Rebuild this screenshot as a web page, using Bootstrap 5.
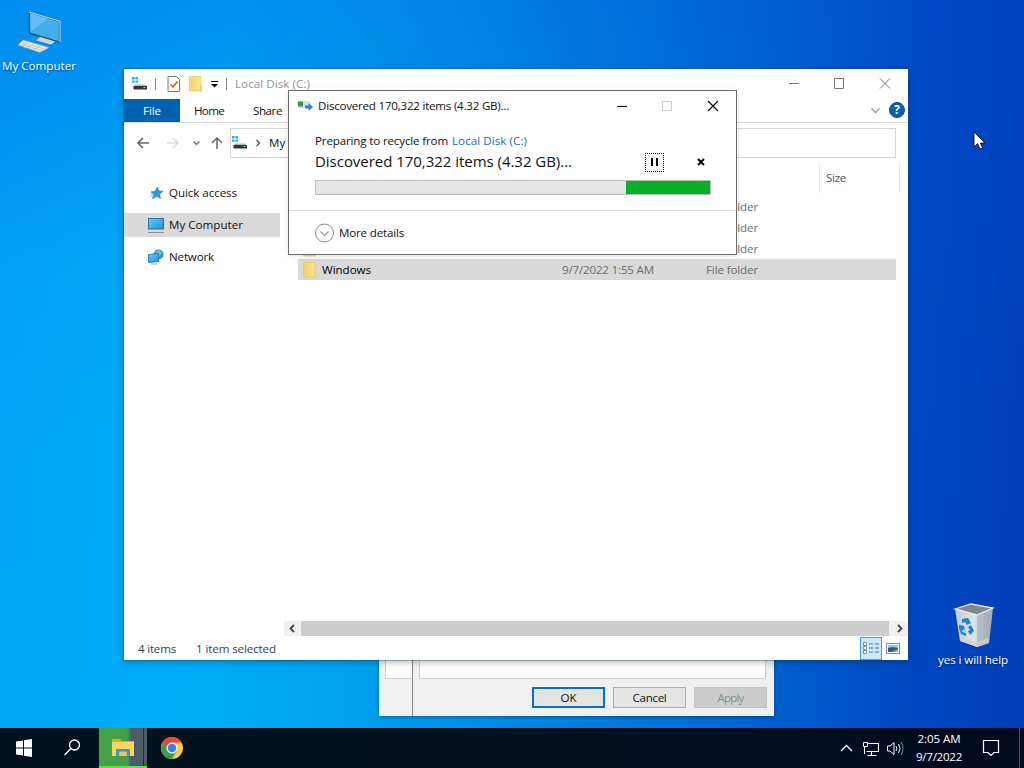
<!DOCTYPE html>
<html lang="en">
<head>
<meta charset="UTF-8">
<meta name="viewport" content="width=device-width, initial-scale=1.0">
<title>Desktop</title>
<link href="https://cdn.jsdelivr.net/npm/bootstrap@5.3.3/dist/css/bootstrap.min.css" rel="stylesheet">
<style>
  body {
    font-family: "Open Sans", "Noto Sans", sans-serif;
    font-size: 11.6px;
    line-height: 16px;
    color: #111;
    width: 1024px;
    height: 768px;
    overflow: hidden;
  }
  svg { display: block; flex-shrink: 0; }
  [data-w] { white-space: nowrap; flex-shrink: 0; }

  .desktop {
    height: 768px;
    background:
      linear-gradient(180deg, rgba(0,70,215,.26), rgba(0,90,225,.06) 35%, rgba(0,100,230,0) 60%),
      linear-gradient(93deg, #00a4f6 0%, #00aef8 22%, #009fee 38%, #0084e0 55%, #0064d1 74%, #0049c3 88%, #003db6 100%);
  }
  .desk-icon { position: absolute; color: #fff; text-shadow: 0 1px 2px rgba(0,0,0,.6); }
  .icon-computer { left: 2px; top: 8px; width: 76px; }
  .icon-bin { left: 936px; top: 600px; width: 74px; }
  .pointer { position: absolute; left: 973px; top: 131px; }

  /* properties window behind the explorer */
  .props { position: absolute; left: 379px; top: 640px; width: 395px; height: 76px; background: #f0f0f0; box-shadow: 0 1px 4px rgba(0,0,0,.35); }
  .props-side { width: 34px; padding-left: 6px; border-right: 1px solid #888; }
  .props-side div, .props-list { height: 39px; background: #fff; border: 1px solid #ccc; border-right: 0; }
  .props-list { margin: 0 8px 8px 6px; border-right: 1px solid #ccc; }
  .props-buttons { padding-right: 7px; }
  .props-btn { width: 73px; height: 21px; border: 1px solid #adadad; background: #e4e4e4; border-radius: 0; padding: 0; font-size: 11.6px; line-height: 19px; color: #111; }
  .props-ok { border: 2px solid #0a6fc2; line-height: 17px; }
  .props-apply { background: #ccc; border-color: #c4c4c4; color: #8c8c8c; }

  /* explorer */
  .explorer { position: absolute; left: 124px; top: 69px; width: 784px; height: 591px; background: #fff; box-shadow: 0 0 0 1px rgba(20,80,130,.35), 0 2px 7px rgba(0,0,0,.3); }
  .ex-title { height: 30px; padding: 0 9px 0 8px; color: #929292; }
  .title-sep { width: 1px; height: 12px; background: #8b8b8b; }
  .title-sep-first { margin: 0 11px 0 7px; }
  .ex-ribbon { height: 24px; border-bottom: 1px solid #dadada; }
  .tab-file { width: 56px; height: 23px; background: #0063b1; color: #fff; }
  .tab-home { margin: 0 29px 0 14px; }
  .help-dot { width: 16px; height: 16px; border-radius: 50%; background: #0a62ad; color: #fff; font-weight: 700; border: 1px solid #0a4a88; line-height: 14px; margin-right: 3px; margin-bottom: 1px; }
  .ex-nav { height: 40px; padding: 5px 12px 0 0; }
  .ex-address { height: 30px; border: 1px solid #d6d6d6; padding-left: 1px; }
  .ex-side { width: 160px; padding-top: 18px; }
  .side-row { height: 24px; margin-bottom: 8px; width: 156px; padding-left: 23px; }
  .side-row svg { margin-right: 4px; }
  .row-picked { background: #d9d9d9; }
  .ex-files { width: 624px; padding-left: 14px; }
  .files-head { height: 30px; color: #4c5566; margin-bottom: 3px; }
  .head-type { width: 522px; border-right: 1px solid #e6e6e6; }
  .head-size { width: 80px; padding-left: 6px; border-right: 1px solid #e6e6e6; }
  .file-row { height: 21px; width: 598px; padding-left: 4px; color: #6d6d6d; }
  .col-file { width: 260px; color: #000; }
  .col-when { width: 144px; }
  .ex-scroll { height: 15px; margin-left: 160px; background: #f0f0f0; }
  .scroll-thumb { width: 588px; background: #cdcdcd; }
  .ex-status { height: 24px; padding-left: 14px; color: #33415c; }
  .ex-status span { padding-top: 1px; }
  .view-on { width: 22px; height: 23px; background: #c9e8f8; border: 1px solid #3fa0ce; }

  /* recycle progress */
  .progress-win { position: absolute; left: 288px; top: 90px; width: 449px; height: 165px; background: #fff; border: 1px solid #6b6b6b; box-shadow: 0 1px 6px rgba(0,0,0,.12); }
  .pw-title { height: 29px; padding: 0 4px 0 8px; }
  .pw-body { height: 90px; padding: 13px 26px 0; }
  .pw-link { color: #2569b8; }
  .pw-big { font-size: 15px; line-height: 24px; }
  .pw-tools { padding: 2px 5px 0 0; }
  .pw-bar { height: 15px; width: 396px; background: #e6e6e6; border: 1px solid #bcbcbc; margin-top: 7px; }
  .pw-fill { background: #06b025; }
  .pw-pause { width: 19px; height: 19px; border: 1px dotted #000; margin-right: 33px; }
  .pw-foot { height: 44px; border-top: 1px solid #dfdfdf; padding-left: 26px; }

  /* taskbar */
  .taskbar { position: absolute; left: 0; top: 728px; width: 1024px; height: 40px; background: linear-gradient(90deg, #02131f, #02101f 50%, #020b20); color: #fff; }
  .task-open { width: 48px; height: 40px; background: linear-gradient(90deg, #43a047 0 28px, #4d5a68 32px 44px, #1f2b38 44px 45px, #4d5a68 45px); border-bottom: 2px solid #5ee04a; }
  .chrome-icon { margin-left: 13px; }
  .tray { margin-right: 9px; }
  .clock { width: 48px; line-height: 18px; }
</style>
</head>
<body>

<!-- shared icons -->
<svg width="0" height="0" class="position-absolute">
  <defs>
    <linearGradient id="gScreen" x1="0" y1="0" x2="1" y2="1"><stop offset="0" stop-color="#6ccbf8"/><stop offset="1" stop-color="#1c8fdc"/></linearGradient>
    <linearGradient id="gFolder" x1="0" y1="0" x2="1" y2="0"><stop offset="0" stop-color="#f3d468"/><stop offset="1" stop-color="#fde68f"/></linearGradient>
    <linearGradient id="gBin" x1="0" y1="0" x2="1" y2="0"><stop offset="0" stop-color="#c4cad2"/><stop offset=".5" stop-color="#dfe2e6"/><stop offset="1" stop-color="#a9b1bb"/></linearGradient>
    <symbol id="drive" viewBox="0 0 16 14">
      <path d="M0 0h2.600v2.400H0zM3.400 0H6v2.400H3.400zM0 3.400h2.600v2.400H0zM3.400 3.400H6v2.400H3.400z" fill="#1fb4cf"/>
      <path d="M3 7.500h10.500l1.500 2H1.500z" fill="#b4b9bd"/>
      <rect x="1.500" y="9" width="13.500" height="3.500" rx=".6" fill="#30363b"/>
      <rect x="11.500" y="10" width="2" height="1" fill="#5fd39a"/>
    </symbol>
    <symbol id="folder" viewBox="0 0 14 16">
      <path d="M.5.500h11.500v14.500H.5z" fill="url(#gFolder)" stroke="#e3c45c" stroke-width=".6"/>
      <path d="M11 9.500h2v6h-2z" fill="#f2cf62"/>
    </symbol>
  </defs>
</svg>

<div class="desktop position-relative overflow-hidden">

  <div class="desk-icon icon-computer d-flex flex-column">
    <svg class="ms-3" width="48" height="50" viewBox="0 0 48 50">
      <path d="M11.500 4.500l30 9v20.500l-30-9z" fill="#42aef2" stroke="#333f4c" stroke-width="1.200"/>
      <path d="M12 5l18 5.500-17.500 13z" fill="#7cc8f6" opacity=".6"/>
      <path d="M11 4l31 9.300v21" fill="none" stroke="#d8dde2"/>
      <path d="M22 29l10 3 5 1.500-4 3-15-4z" fill="#cfd4d9"/>
      <path d="M5 32l26 7.500-9 5L0 37z" fill="#e9e9e8" stroke="#a7a7a3" stroke-width=".7"/>
      <path d="M4 34.500l22 6.500M2 36l21.500 6.500M10 34l-6 4M16 35.500l-6 4.500M22 37.500l-6 4" stroke="#b9b9b9" stroke-width=".7"/>
    </svg>
    <span data-w="74">My Computer</span>
  </div>

  <div class="desk-icon icon-bin d-flex flex-column align-items-center">
    <svg width="44" height="48" viewBox="0 0 44 48" class="mb-1">
      <path d="M4 9l22 6 16-8-4 36-12 4L9 41z" fill="url(#gBin)"/>
      <path d="M26 15l16-8-4 36-12 4z" fill="#9ca5b1" opacity=".55"/>
      <path d="M4 9L20 4l22 4-16 7z" fill="#7c8792" stroke="#e8ebee" stroke-width="1.300"/>
      <path d="M9 37l17 5 12-4-.5 5L26 47 9 41z" fill="#d8d2c8" opacity=".7"/>
      <path d="M11 19l6-1 3 5-4 2-2-3-3 1zM20 25l3 6-4 4-2-4 2-1-2-3zM8 25l5 1 1 4-2-1-1 3 4 1v3l-5-2-2-6z" fill="#1686d2"/>
    </svg>
    <span data-w="70">yes i will help</span>
  </div>

  <div class="props d-flex">
    <div class="props-side"><div></div></div>
    <div class="flex-grow-1">
      <div class="props-list"></div>
      <div class="props-buttons d-flex justify-content-end gap-2">
        <button type="button" class="props-btn props-ok"><span data-w="16">OK</span></button>
        <button type="button" class="props-btn"><span data-w="34">Cancel</span></button>
        <button type="button" class="props-btn props-apply" disabled><span data-w="26">Apply</span></button>
      </div>
    </div>
  </div>

  <div class="explorer d-flex flex-column">
    <div class="ex-title d-flex align-items-center">
      <svg width="16" height="14"><use href="#drive"/></svg>
      <div class="title-sep title-sep-first"></div>
      <svg class="me-2" width="14" height="16" viewBox="0 0 14 16"><path d="M1 .5h8.500l3 3v12H1z" fill="#fafafa" stroke="#777"/><path d="M3.500 8.500L6 11l4.500-5.500" fill="none" stroke="#d9472b" stroke-width="1.300"/></svg>
      <svg class="me-2" width="14" height="16"><use href="#folder"/></svg>
      <svg width="7" height="8" viewBox="0 0 7 8"><path d="M0 1.500h7" stroke="#000"/><path d="M0 4h7L3.500 7.500z" fill="#000"/></svg>
      <div class="title-sep mx-2"></div>
      <span data-w="75">Local Disk (C:)</span>
      <svg class="ms-auto" width="114" height="12" viewBox="0 0 114 12"><path d="M4 5.500h10M49.500.500h9v10h-9zM95 .5l10 10M105 .5l-10 10" fill="none" stroke="#777"/></svg>
    </div>
    <div class="ex-ribbon d-flex align-items-center">
      <div class="tab-file d-flex align-items-center justify-content-center"><span data-w="18">File</span></div>
      <span class="tab-home" data-w="30">Home</span>
      <span data-w="29">Share</span>
      <svg class="ms-auto me-2 mt-n1" width="10" height="6" viewBox="0 0 10 6"><path d="M.5.500l4 4 4-4" fill="none" stroke="#999" stroke-width="1.300"/></svg>
      <div class="help-dot d-flex justify-content-center">?</div>
    </div>
    <div class="ex-nav d-flex">
      <svg width="106" height="30" viewBox="0 0 106 30">
        <path d="M25 15H14m5-5l-5 5 5 5" fill="none" stroke="#666" stroke-width="1.500"/>
        <path d="M43 15h11m-5-5l5 5-5 5" fill="none" stroke="#ddd" stroke-width="1.500"/>
        <path d="M69.500 13.500l3 3 3-3" fill="none" stroke="#777" stroke-width="1.500"/>
        <path d="M93 21V10m-5 5l5-5 5 5" fill="none" stroke="#666" stroke-width="1.500"/>
      </svg>
      <div class="ex-address flex-grow-1 d-flex align-items-center">
        <svg width="16" height="14"><use href="#drive"/></svg>
        <svg class="mx-2" width="5" height="8" viewBox="0 0 5 8"><path d="M.5 1l3 3-3 3" fill="none" stroke="#555" stroke-width="1.300"/></svg>
        <span data-w="74">My Computer</span>
      </div>
    </div>
    <div class="d-flex flex-grow-1">
      <div class="ex-side">
        <div class="side-row d-flex align-items-center">
          <svg width="18" height="16" viewBox="0 0 18 16"><path d="M10.500 2l1.200 4 4.300.2-3.500 3 1 4.300-3.800-2.200-4.200 2.500 1.300-4.300L4 6.800l4-.5z" fill="#2b9be0" stroke="#2079b8" stroke-width=".6"/><path d="M3 11.500l3-2M4 8.500l2 0" stroke="#7cc4ee"/></svg>
          <span data-w="68">Quick access</span>
        </div>
        <div class="side-row row-picked d-flex align-items-center">
          <svg width="18" height="16" viewBox="0 0 18 16"><rect x="1.500" y="1.500" width="15" height="10.500" fill="url(#gScreen)" stroke="#2477ae"/><path d="M1 15.500h16" stroke="#8b8b8b"/></svg>
          <span data-w="74">My Computer</span>
        </div>
        <div class="side-row d-flex align-items-center">
          <svg width="18" height="16" viewBox="0 0 18 16"><circle cx="11.500" cy="5.500" r="5" fill="#3d8fc2"/><path d="M8 3l4-2 3 3-3 4z" fill="#9fd0ea" opacity=".7"/><path d="M1.500 5.500l10-1v8l-10 1z" fill="url(#gScreen)" stroke="#2477ae" stroke-width=".9"/><path d="M4 15h6" stroke="#79a5c2"/></svg>
          <span data-w="45">Network</span>
        </div>
      </div>
      <div class="ex-files">
        <div class="files-head d-flex">
          <div class="head-type"></div>
          <div class="head-size d-flex align-items-center"><span data-w="20">Size</span></div>
        </div>
        <div id="fileRows"></div>
      </div>
    </div>
    <div class="ex-scroll d-flex align-items-stretch">
      <svg width="17" height="15" viewBox="0 0 17 15"><path d="M10 4L6.500 7.500 10 11" fill="none" stroke="#444" stroke-width="1.800"/></svg>
      <div class="scroll-thumb"></div>
      <svg width="19" height="15" viewBox="0 0 19 15"><path d="M9 4l3.500 3.500L9 11" fill="none" stroke="#444" stroke-width="1.800"/></svg>
    </div>
    <div class="ex-status d-flex align-items-center">
      <span class="me-3" data-w="38">4 items</span>
      <span class="ms-1 ps-0" data-w="80">1 item selected</span>
      <div class="view-on ms-auto me-1 d-flex align-items-center justify-content-center">
        <svg width="16" height="13" viewBox="0 0 16 13"><path d="M.5.500h3v3h-3zM.5 4.500h3v3h-3zM.5 8.500h3v3h-3z" fill="#fff" stroke="#7d8da0"/><path d="M6 2h4M12 2h4M6 6h4M12 6h4M6 10h4M12 10h4" stroke="#4e6f8e"/></svg>
      </div>
      <svg class="me-2 mt-n1" width="14" height="11" viewBox="0 0 14 11"><rect x=".5" y=".5" width="13" height="10" fill="#fff" stroke="#7d8da0"/><path d="M2 2h10v3H2z" fill="#8cc8ec"/><path d="M2 5l5-1 5 1v4H2z" fill="#2d5f7c"/><path d="M6 9l6-3v3z" fill="#8fb59f"/></svg>
    </div>
  </div>

  <div class="progress-win">
    <div class="pw-title d-flex align-items-center">
      <svg class="me-1" width="17" height="12" viewBox="0 0 17 12"><rect x="1" y="1" width="12" height="7" fill="#d9dfe2"/><rect x="1" y="1.500" width="5" height="5" fill="#2f9a58"/><path d="M8 5.500h3.500V3L16 7l-4.500 4V8.500H8z" fill="#2a7fd4"/></svg>
      <span data-w="191">Discovered 170,322 items (4.32 GB)...</span>
      <svg class="ms-auto" width="119" height="12" viewBox="0 0 119 12"><path d="M4 6.500h10M95 1l10 10M105 1L95 11" fill="none" stroke="#000" stroke-width="1.100"/><path d="M49.500 1.500h9v9h-9z" fill="none" stroke="#c8c8c8"/></svg>
    </div>
    <div class="pw-body">
      <div class="d-flex"><span class="me-1" data-w="133">Preparing to recycle from</span><span class="pw-link" data-w="75">Local Disk (C:)</span></div>
      <div class="d-flex align-items-center">
        <span class="pw-big" data-w="257">Discovered 170,322 items (4.32 GB)...</span>
        <div class="pw-tools ms-auto d-flex align-items-center">
          <div class="pw-pause d-flex align-items-center justify-content-center"><svg width="8" height="8" viewBox="0 0 8 8"><path d="M0 0h2v8H0zM5 0h2v8H5z"/></svg></div>
          <svg width="8" height="8" viewBox="0 0 8 8"><path d="M1 1l6 6M7 1L1 7" stroke="#000" stroke-width="1.900"/></svg>
        </div>
      </div>
      <div class="pw-bar d-flex justify-content-end"><div class="pw-fill" id="pwFill"></div></div>
    </div>
    <div class="pw-foot d-flex align-items-center">
      <svg class="me-1" width="20" height="20" viewBox="0 0 20 20"><circle cx="9.500" cy="10" r="9" fill="#fff" stroke="#8c8c8c"/><path d="M5.500 8.500l4 4 4-4" fill="none" stroke="#999" stroke-width="1.200"/></svg>
      <span data-w="65">More details</span>
    </div>
  </div>

  <svg class="pointer" width="16" height="22" viewBox="0 0 16 22"><path d="M1 1v15l3.500-3.500L7 18l2.500-1L7.500 12H12z" fill="#fff" stroke="#111" stroke-width=".9"/></svg>

  <div class="taskbar d-flex align-items-center">
    <svg width="99" height="40" viewBox="0 0 99 40">
      <path d="M16 13.500l7-1v7h-7zM24 12.300l8-1.200v8.400h-8zM16 20.500h7v7l-7-1zM24 20.500h8v8.400l-8-1.200z" fill="#fff"/>
      <circle cx="74.500" cy="17" r="5" fill="none" stroke="#fff" stroke-width="1.300"/><path d="M71 20.500l-6.500 6.500" stroke="#fff" stroke-width="1.500"/>
    </svg>
    <div class="task-open d-flex align-items-center justify-content-center">
      <svg width="22" height="19" viewBox="0 0 22 19"><path d="M0 1h8l2 2h12v14H0z" fill="#e3a92b"/><path d="M0 4h22v14H0z" fill="#fbd660"/><path d="M4 18v-7h14v7h-3.500v-4h-7v4z" fill="#3f93d2"/><path d="M7.500 13.500h7V18h-7z" fill="#f2c64f"/></svg>
    </div>
    <svg class="chrome-icon" width="24" height="24" viewBox="0 0 24 24">
      <circle cx="12" cy="12" r="11" fill="#ffcd40"/>
      <path d="M12 6.500h9.500a11 11 0 0 0-19 0L7.200 14.700z" fill="#e8453c"/>
      <path d="M2.500 6.500A11 11 0 0 0 12 23l4.800-8.300L7.200 14.700z" fill="#2fa24c"/>
      <circle cx="12" cy="12" r="5.500" fill="#fff"/><circle cx="12" cy="12" r="4.300" fill="#3b7ded"/>
    </svg>
    <svg class="tray ms-auto" width="66" height="20" viewBox="0 0 66 20">
      <path d="M1 13l5.500-5.500L12 13" fill="none" stroke="#fff" stroke-width="1.300"/>
      <path d="M28 5.500h10.500v8H26.500M31.500 14v3M27.500 17.500h9M24.500 8v8" fill="none" stroke="#fff" stroke-width="1.100"/>
      <path d="M23.500 4.500h4v4h-4z" fill="none" stroke="#fff"/>
      <path d="M47.500 8h2.500l4-3.500v12L50 13h-2.500zM56 8q1.500 2.500 0 5M58.500 6q3 4.500 0 9" fill="none" stroke="#fff"/><path d="M61 4q4 6.500 0 13" fill="none" stroke="#8a919c"/>
    </svg>
    <div class="clock d-flex flex-column align-items-center"><span data-w="43">2:05 AM</span><span data-w="46">9/7/2022</span></div>
    <svg class="ms-3" width="45" height="40" viewBox="0 0 45 40"><path d="M4.500 12.500h15v12h-4.500l-3 3-3-3H4.500z" fill="none" stroke="#fff" stroke-width="1.200"/><path d="M40.500 0v40" stroke="#465166"/></svg>
  </div>
</div>

<script>
  const files = [
    { name: "Program Files", when: "9/7/2022 1:55 AM" },
    { name: "Program Files (x86)", when: "9/7/2022 1:55 AM" },
    { name: "Users", when: "9/7/2022 1:55 AM" },
    { name: "Windows", when: "9/7/2022 1:55 AM", picked: true }
  ];

  document.getElementById("fileRows").innerHTML = files.map(f => `
    <div class="file-row d-flex align-items-center ${f.picked ? "row-picked" : ""}">
      <div class="col-file d-flex align-items-center"><svg class="me-1" width="16" height="16"><use href="#folder"/></svg><span ${f.picked ? 'data-w="49"' : ""}>${f.name}</span></div>
      <div class="col-when"><span data-w="92">${f.when}</span></div>
      <span data-w="52">File folder</span>
    </div>`).join("");

  document.getElementById("pwFill").style.width = "84px";

  // spread the letters so every label has its set width
  document.querySelectorAll("[data-w]").forEach(el => {
    const range = document.createRange();
    range.selectNodeContents(el);
    const now = range.getBoundingClientRect().width;
    el.style.letterSpacing = (el.dataset.w - now) / el.textContent.length + "px";
  });
</script>
<script src="https://cdn.jsdelivr.net/npm/bootstrap@5.3.3/dist/js/bootstrap.bundle.min.js"></script>
</body>
</html>
